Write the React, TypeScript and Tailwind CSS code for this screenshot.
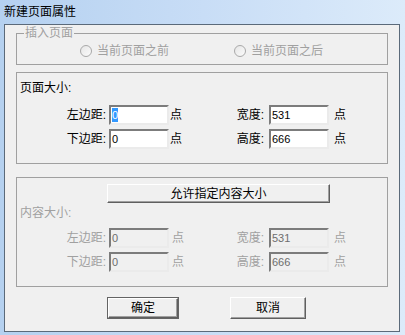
const font = "font-['Liberation_Sans','Noto_Sans_CJK_SC',sans-serif]";

const inputBox =
  "h-[20px] w-[60px] border-2 border-t-[#7c7c7c] border-l-[#7c7c7c] border-b-[#ebebeb] border-r-[#ebebeb] pl-[1px] flex items-center text-[11px] leading-[14px]";

const raised =
  "flex items-center justify-center text-[12px] leading-[16px] text-black bg-[#f0f0f0] border border-t-[#ffffff] border-l-[#ffffff] border-b-[#5f5f5f] border-r-[#5f5f5f] shadow-[inset_-1px_-1px_0_#a0a0a0]";

interface RowProps {
  left: string;
  leftValue: string;
  right: string;
  rightValue: string;
  disabled?: boolean;
  selected?: boolean;
}

function SizeRow({ left, leftValue, right, rightValue, disabled, selected }: RowProps) {
  const label = disabled ? "text-[#a0a0a0]" : "text-black";
  const field = disabled ? "bg-[#f0f0f0] text-[#6d6d6d]" : "bg-white text-black";
  return (
    <div className="flex items-center h-[20px] text-[12px] leading-[16px]">
      <div className={`w-[92px] pr-[3px] text-right ${label}`}>{left}:</div>
      <div className={`${inputBox} ${field}`}>
        {selected ? <span className="bg-[#3399ff] text-white">{leftValue}</span> : leftValue}
      </div>
      <div className={`w-[16px] ${disabled ? "pl-[3px]" : "pl-[1px]"} ${label}`}>点</div>
      <div className={`w-[84px] pr-[5px] text-right ${label}`}>{right}:</div>
      <div className={`${inputBox} ${field}`}>{rightValue}</div>
      <div className={`ml-[5px] ${label}`}>点</div>
    </div>
  );
}

function Radio({ text }: { text: string }) {
  return (
    <div className="flex items-center">
      <div className="w-[12px] h-[12px] rounded-full border border-[#a9a9a9] bg-gradient-to-br from-[#e6e6e6] to-[#fbfbfb]" />
      <span className="ml-[5px] text-[#a0a0a0]">{text}</span>
    </div>
  );
}

export default function App() {
  return (
    <div
      className={`w-[405px] h-[335px] flex flex-col bg-gradient-to-r from-[#b5d1f0] via-[#c8ddf6] to-[#dcebfa] ${font} overflow-hidden`}
    >
      {/* title bar */}
      <div className="h-[24px] flex items-center pl-[4px] text-[12px] leading-[16px] text-black">新建页面属性</div>

      {/* client area */}
      <div className="ml-[4px] w-[396px] h-[308px] border border-[#5b6a7a] bg-[#f0f0f0] px-[11px] text-[12px] leading-[16px]">
        {/* 插入页面 */}
        <fieldset className="h-[40px] border border-[#a0a0a0] flex flex-col">
          <legend className="ml-[7px] px-[1px] text-[#a0a0a0] leading-[16px]">插入页面</legend>
          <div className="flex items-center h-[16px] mt-[2px]">
            <div className="ml-[63px]">
              <Radio text="当前页面之前" />
            </div>
            <div className="ml-[65px]">
              <Radio text="当前页面之后" />
            </div>
          </div>
        </fieldset>

        {/* 页面大小 */}
        <div className="mt-[7px] h-[92px] border border-[#a0a0a0] pt-[7px]">
          <div className="pl-[3px]">页面大小:</div>
          <div className="mt-[9px] flex flex-col gap-[4px]">
            <SizeRow left="左边距" leftValue="0" right="宽度" rightValue="531" selected />
            <SizeRow left="下边距" leftValue="0" right="高度" rightValue="666" />
          </div>
        </div>

        {/* 内容大小 */}
        <div className="mt-[13px] h-[110px] border border-[#a0a0a0] pt-[6px]">
          <div className={`${raised} ml-[90px] w-[223px] h-[19px]`}>允许指定内容大小</div>
          <div className="mt-[2px] pl-[3px] text-[#a0a0a0]">内容大小:</div>
          <div className="mt-[7px] flex flex-col gap-[4px]">
            <SizeRow left="左边距" leftValue="0" right="宽度" rightValue="531" disabled />
            <SizeRow left="下边距" leftValue="0" right="高度" rightValue="666" disabled />
          </div>
        </div>

        {/* buttons */}
        <div className="mt-[10px] flex pl-[91px]">
          <div className="w-[72px] h-[22px] border border-[#646464]">
            <div className={`${raised} w-full h-full`}>确定</div>
          </div>
          <div className={`${raised} ml-[51px] w-[76px] h-[22px]`}>取消</div>
        </div>
      </div>
    </div>
  );
}
